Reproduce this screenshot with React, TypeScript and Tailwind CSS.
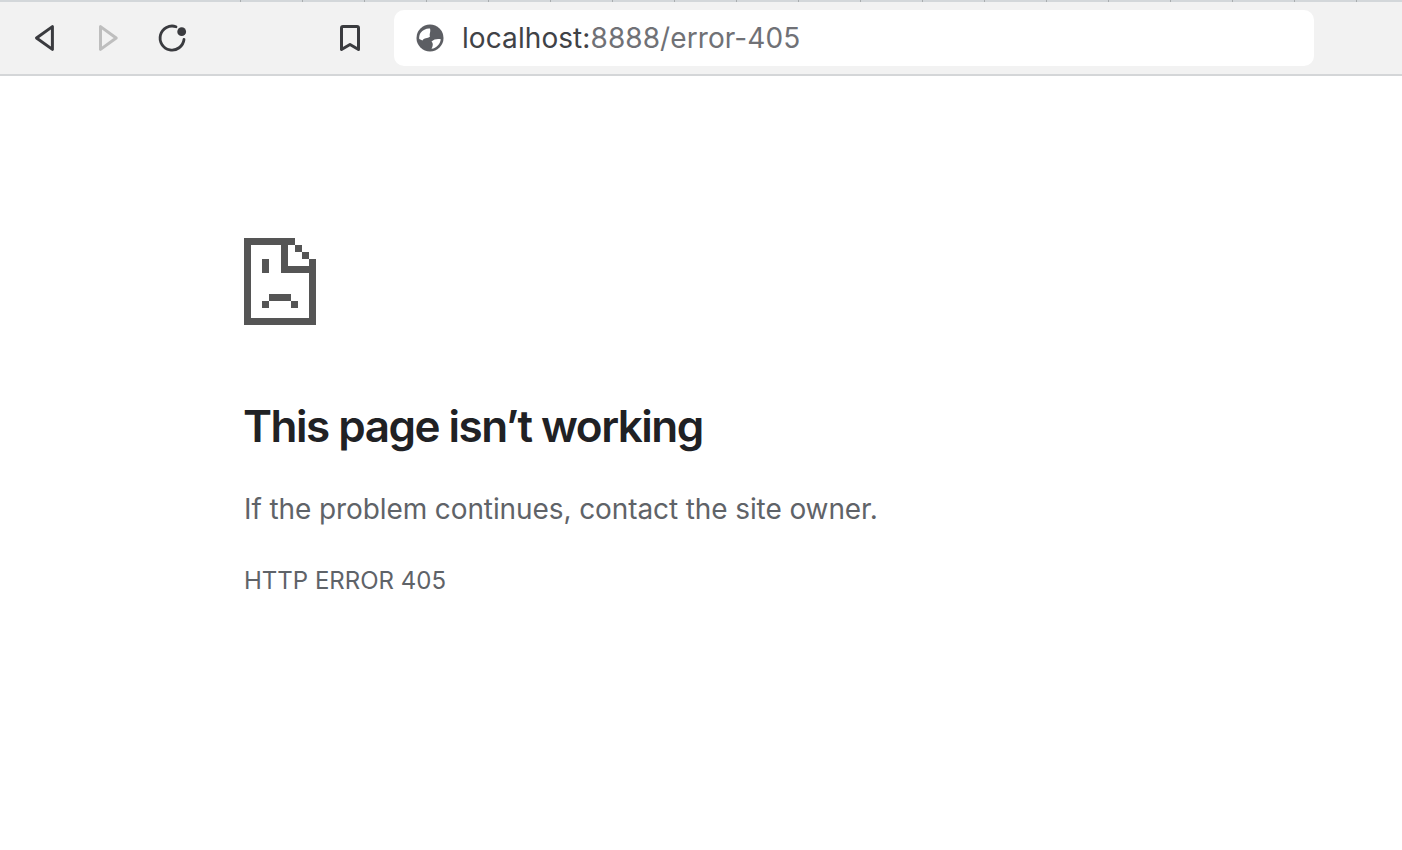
import React from "react";

const ticks = Array.from({ length: 19 }, (_, i) => i);

const SadFile = () => (
  <svg width="72" height="87" viewBox="0 0 72 87" fill="#555555" shapeRendering="crispEdges">
    <rect x="0" y="0" width="51" height="7" />
    <rect x="0" y="0" width="7" height="87" />
    <rect x="0" y="80" width="72" height="7" />
    <rect x="65" y="21" width="7" height="66" />
    <rect x="51" y="7" width="7" height="7" />
    <rect x="58" y="14" width="7" height="7" />
    <rect x="37" y="7" width="7" height="28" />
    <rect x="37" y="28" width="35" height="7" />
    <rect x="18" y="21" width="7" height="14" />
    <rect x="25" y="56" width="22" height="7" />
    <rect x="18" y="63" width="7" height="7" />
    <rect x="47" y="63" width="7" height="7" />
  </svg>
);

const App = () => {
  return (
    <div className="min-h-[850px] bg-white font-['Inter',sans-serif]">
      <header className="h-[76px] bg-[#f2f2f2] border-b-2 border-[#d4d6d8]">
        <div className="h-[2px] bg-[#d3d7da] flex pl-[240px] gap-[60.9px]">
          {ticks.map((t) => (
            <span key={t} className="w-[1.1px] h-[2px] bg-[#a9adaf]" />
          ))}
        </div>
        <div className="flex items-center h-[72px]">
          <svg className="ml-[34px]" width="22" height="28" viewBox="0 0 22 28" fill="none" stroke="#3a3b3f" strokeWidth="3" strokeLinejoin="round" strokeLinecap="round">
            <path d="M18.4 2.6 L2.5 14 L18.4 25.4 Z" />
          </svg>
          <svg className="ml-[42px]" width="22" height="28" viewBox="0 0 22 28" fill="none" stroke="#bebebe" strokeWidth="3" strokeLinejoin="round" strokeLinecap="round">
            <path d="M2.5 2.6 L18.2 14 L2.5 25.4 Z" />
          </svg>
          <svg className="ml-[37px]" width="30" height="30" viewBox="0 0 30 30" fill="none">
            <path d="M27 16.5 A12 12 0 1 1 19 3.7" stroke="#3a3b3f" strokeWidth="2.8" strokeLinecap="round" />
            <circle cx="24.7" cy="8.7" r="4.4" fill="#3a3b3f" />
          </svg>
          <svg className="ml-[151px]" width="24" height="30" viewBox="0 0 24 30" fill="none" stroke="#3a3b3f" strokeWidth="3" strokeLinejoin="round">
            <path d="M3.5 5 Q3.5 3.5 5 3.5 H19 Q20.5 3.5 20.5 5 V26.5 L12 21.5 L3.5 26.5 Z" />
          </svg>
          <div className="ml-[32px] w-[920px] h-[56px] bg-white rounded-[10px] flex items-center pl-[22px]">
            <svg width="28" height="28" viewBox="0 0 28 28">
              <circle cx="14" cy="14" r="13.5" fill="#5c5e63" />
              <path d="M4.5 9 C7 5.5 11 4 14 4.5 C15 8 13 10 14 12.5 C11.5 15 8 13.5 6.5 16.5 L3.2 15 C3 12.5 3.5 10.5 4.5 9 Z" fill="#ffffff" />
              <path d="M15.5 17.5 C18 15 21.5 14.5 24.8 15.2 C24.2 20 20.5 24 15.5 24.8 C17 22 17.5 19.5 15.5 17.5 Z" fill="#ffffff" />
            </svg>
            <div className="ml-[18px] text-[28px] leading-none tracking-[0.08px]">
              <span className="text-[#404246]">localhost:</span>
              <span className="text-[#707176]">8888/error-405</span>
            </div>
          </div>
        </div>
      </header>
      <main className="pl-[244px] pt-[162px]">
        <SadFile />
        <h1 className="mt-[75px] -ml-[1px] text-[44px] leading-[52px] font-semibold text-[#202124] tracking-[-1.5px]">
          This page isn’t working
        </h1>
        <p className="mt-[39px] text-[28px] leading-[36px] text-[#5f6368] tracking-[-0.1px]">
          If the problem continues, contact the site owner.
        </p>
        <p className="mt-[38px] text-[24px] leading-[32px] text-[#5f6368]">HTTP ERROR 405</p>
      </main>
    </div>
  );
};

export default App;
